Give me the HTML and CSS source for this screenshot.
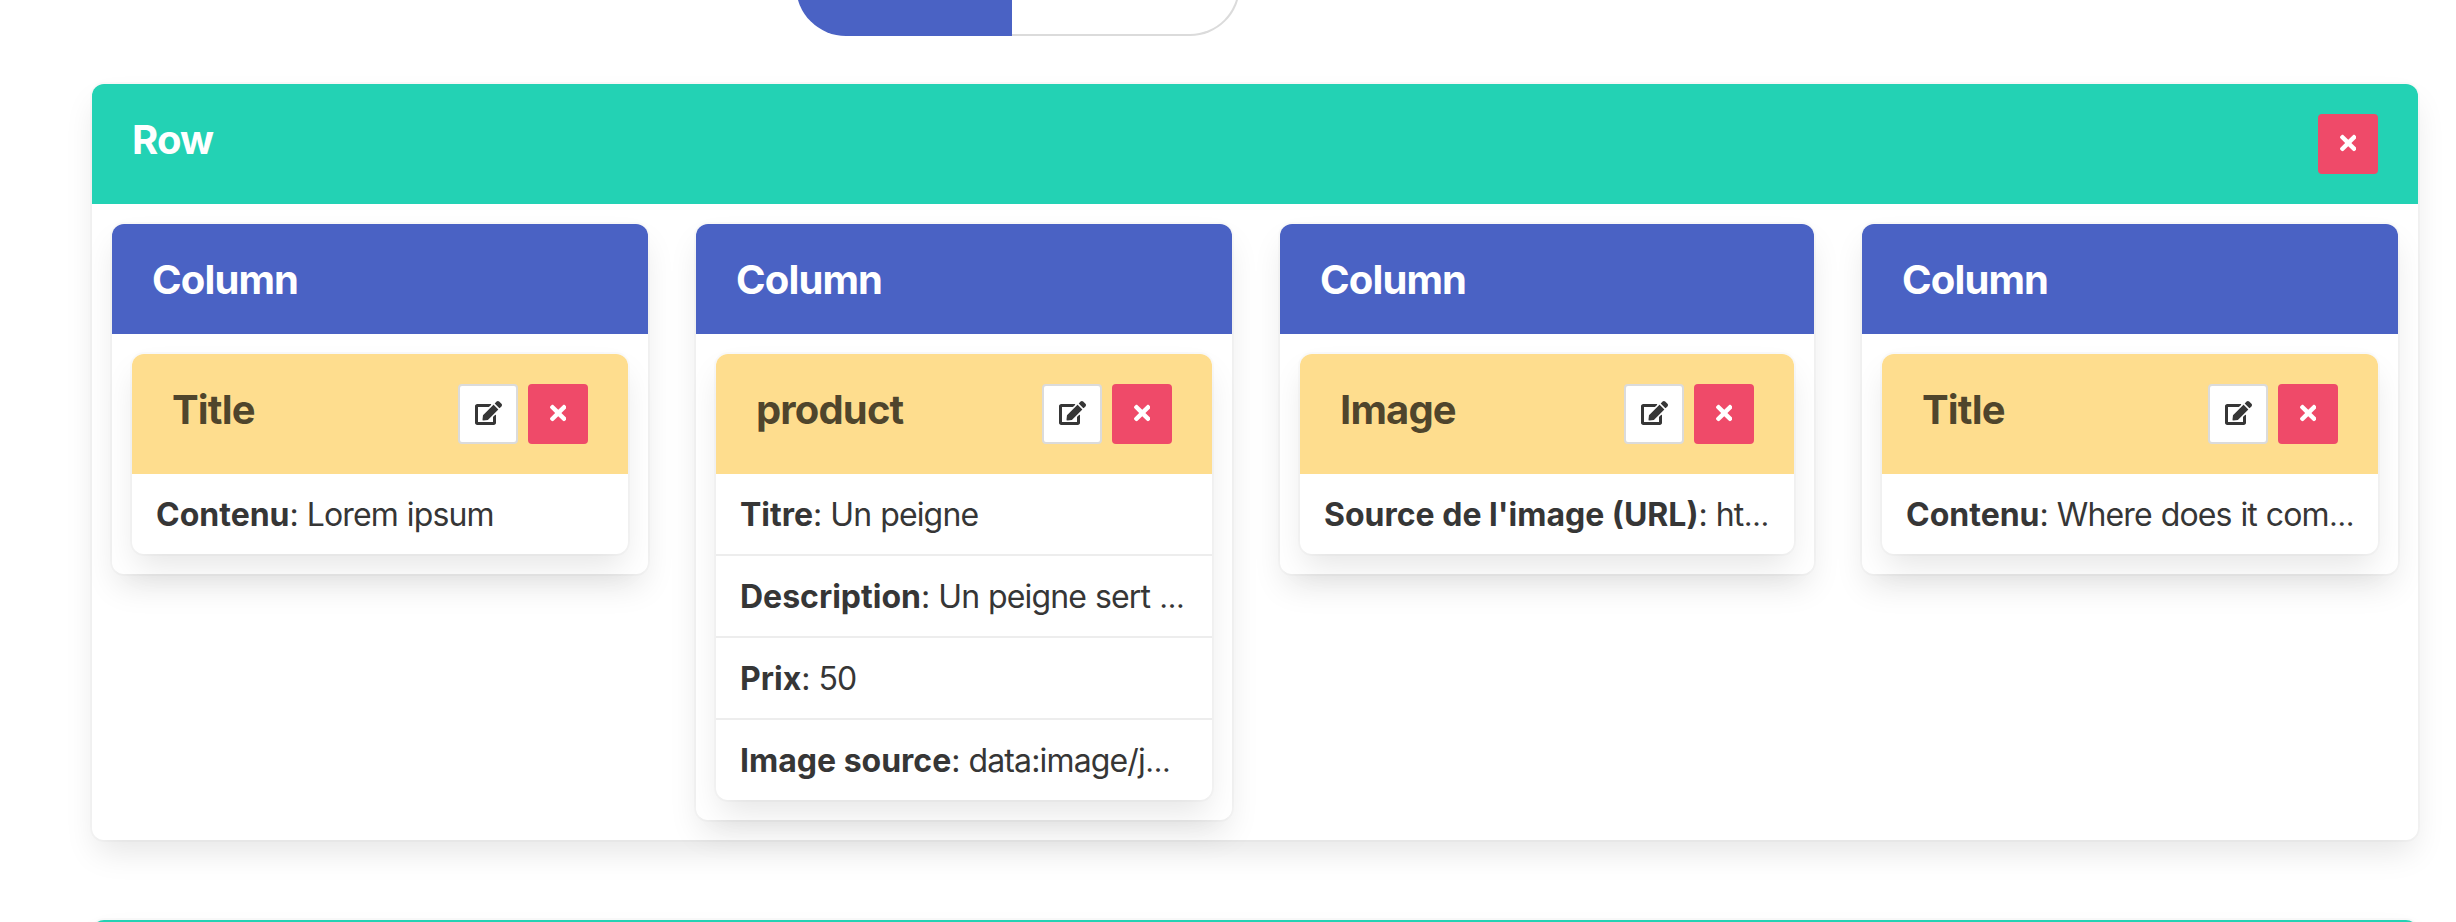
FILE: index.html
```html
<!DOCTYPE html>
<html lang="fr">
<head>
<meta charset="utf-8">
<title>Page builder</title>
<link rel="stylesheet" href="styles.css">
</head>
<body class="page">
<svg width="0" height="0" class="sprite" aria-hidden="true">
  <symbol id="icon-edit" viewBox="0 0 576 512"><path d="M402.6 83.2l90.2 90.2c3.8 3.8 3.8 10 0 13.8L274.4 405.6l-92.8 10.3c-12.4 1.4-22.9-9.1-21.5-21.5l10.3-92.8L388.8 83.2c3.8-3.8 10-3.8 13.8 0zm162-22.9l-48.8-48.8c-15.2-15.2-39.9-15.2-55.2 0l-35.4 35.4c-3.8 3.8-3.8 10 0 13.8l90.2 90.2c3.8 3.8 10 3.8 13.8 0l35.4-35.4c15.2-15.3 15.2-40 0-55.2zM384 346.2V448H64V128h229.8c3.2 0 6.2-1.3 8.5-3.5l40-40c7.6-7.6 2.2-20.5-8.5-20.5H48C21.5 64 0 85.5 0 112v352c0 26.5 21.5 48 48 48h352c26.5 0 48-21.5 48-48V306.2c0-10.7-12.9-16-20.5-8.5l-40 40c-2.2 2.3-3.5 5.3-3.5 8.5z"/></symbol>
  <symbol id="icon-times" viewBox="0 0 352 512"><path d="M242.72 256l100.07-100.07c12.28-12.28 12.28-32.19 0-44.48l-22.24-22.24c-12.28-12.28-32.19-12.28-44.48 0L176 189.28 75.93 89.21c-12.28-12.28-32.19-12.28-44.48 0L9.21 111.45c-12.28 12.28-12.28 32.19 0 44.48L109.28 256 9.21 356.07c-12.28 12.28-12.28 32.19 0 44.48l22.24 22.24c12.28 12.28 32.2 12.28 44.48 0L176 322.72l100.07 100.07c12.28 12.28 32.2 12.28 44.48 0l22.24-22.24c12.28-12.28 12.28-32.19 0-44.48L242.72 256z"/></symbol>
</svg>

<div class="toggle">
  <button class="toggle-btn is-active" type="button" aria-label="Edit"></button>
  <button class="toggle-btn" type="button" aria-label="Preview"></button>
</div>

<main class="builder">
  <section class="card">
    <header class="card-head is-row">
      <h2 class="title">Row</h2>
      <button class="btn is-danger" type="button"><svg class="icon-times"><use href="#icon-times"/></svg></button>
    </header>
    <div class="columns">
      <article class="card">
        <header class="card-head is-column"><h3 class="title">Column</h3></header>
        <div class="column-body">
          <div class="card">
            <header class="card-head is-block">
              <h4 class="title">Title</h4>
              <button class="btn" type="button"><svg class="icon-edit"><use href="#icon-edit"/></svg></button>
              <button class="btn is-danger" type="button"><svg class="icon-times"><use href="#icon-times"/></svg></button>
            </header>
            <ul class="fields">
              <li class="field"><strong class="label">Contenu</strong>: Lorem ipsum</li>
            </ul>
          </div>
        </div>
      </article>

      <article class="card">
        <header class="card-head is-column"><h3 class="title">Column</h3></header>
        <div class="column-body">
          <div class="card">
            <header class="card-head is-block">
              <h4 class="title">product</h4>
              <button class="btn" type="button"><svg class="icon-edit"><use href="#icon-edit"/></svg></button>
              <button class="btn is-danger" type="button"><svg class="icon-times"><use href="#icon-times"/></svg></button>
            </header>
            <ul class="fields">
              <li class="field"><strong class="label">Titre</strong>: Un peigne</li>
              <li class="field"><strong class="label">Description</strong>: Un peigne sert <span class="dots">…</span></li>
              <li class="field"><strong class="label">Prix</strong>: 50</li>
              <li class="field"><strong class="label">Image source</strong>: data:image/j<span class="dots">…</span></li>
            </ul>
          </div>
        </div>
      </article>

      <article class="card">
        <header class="card-head is-column"><h3 class="title">Column</h3></header>
        <div class="column-body">
          <div class="card">
            <header class="card-head is-block">
              <h4 class="title">Image</h4>
              <button class="btn" type="button"><svg class="icon-edit"><use href="#icon-edit"/></svg></button>
              <button class="btn is-danger" type="button"><svg class="icon-times"><use href="#icon-times"/></svg></button>
            </header>
            <ul class="fields">
              <li class="field"><strong class="label">Source de l'image (URL)</strong>: ht<span class="dots">…</span></li>
            </ul>
          </div>
        </div>
      </article>

      <article class="card">
        <header class="card-head is-column"><h3 class="title">Column</h3></header>
        <div class="column-body">
          <div class="card">
            <header class="card-head is-block">
              <h4 class="title">Title</h4>
              <button class="btn" type="button"><svg class="icon-edit"><use href="#icon-edit"/></svg></button>
              <button class="btn is-danger" type="button"><svg class="icon-times"><use href="#icon-times"/></svg></button>
            </header>
            <ul class="fields">
              <li class="field"><strong class="label">Contenu</strong>: Where does it com<span class="dots">…</span></li>
            </ul>
          </div>
        </div>
      </article>
    </div>
  </section>

  <section class="card is-clipped">
    <header class="card-head is-row is-empty"></header>
  </section>
</main>
</body>
</html>
```
FILE: styles.css
```css
* { box-sizing: border-box; }

.page {
  margin: 0;
  height: 922px;
  overflow: hidden;
  background: #fff;
  color: #363636;
  font-family: Inter, "Liberation Sans", sans-serif;
  font-size: 32px;
  line-height: 48px;
}

.sprite { display: block; }

/* Pill switch, scrolled mostly out of view */
.toggle {
  display: flex;
  width: 444px;
  height: 100px;
  margin: -64px 0 48px 796px;
}
.toggle-btn {
  flex: 1;
  margin: 0;
  padding: 0;
  border: 2px solid #dbdbdb;
  border-left: 0;
  border-radius: 0 50px 50px 0;
  background: #fff;
}
.toggle-btn.is-active {
  flex: 0 0 216px;
  border: 0;
  border-radius: 50px 0 0 50px;
  background: #4a62c4;
}

.builder {
  display: flex;
  flex-direction: column;
  gap: 80px;
  height: 838px;
  padding: 0 38px 0 92px;
}
.builder > .card { flex: none; }

.card {
  border-radius: 12px;
  background: #fff;
  box-shadow: 0 16px 32px -4px rgba(10, 10, 10, .1), 0 0 0 2px rgba(10, 10, 10, .02);
}

.card-head {
  display: flex;
  align-items: flex-start;
  gap: 10px;
  padding: 30px 40px;
  border-radius: 12px 12px 0 0;
  color: #fff;
}
.is-row { background: #23d2b4; }
.is-column { background: #4a62c4; }
.is-block { background: #fedd8e; color: rgba(0, 0, 0, .7); }
.is-empty { height: 120px; }

.title {
  flex: 1;
  margin: 0;
  padding-top: 1px;
  font-size: 40px;
  font-weight: 700;
  line-height: 49px;
  letter-spacing: -.85px;
}

.btn {
  display: flex;
  align-items: center;
  justify-content: center;
  width: 60px;
  height: 60px;
  margin: 0;
  padding: 0 0 2px;
  border: 2px solid #dbdbdb;
  border-radius: 4px;
  background: #fff;
  color: #363636;
}
.btn.is-danger {
  border-color: transparent;
  background: #ef4a69 border-box;
  color: #fff;
}
.icon-edit { width: 27px; height: 24px; fill: currentColor; }
.icon-times { width: 16.5px; height: 24px; fill: currentColor; }

.columns {
  display: grid;
  grid-template-columns: 536px 536px 534px 536px;
  align-items: start;
  gap: 48px;
  padding: 20px;
}
.column-body { padding: 20px; }

.fields {
  margin: 0;
  padding: 0;
  list-style: none;
}
.field {
  padding: 17px 24px 15px;
  border-bottom: 2px solid #ededed;
  letter-spacing: -.85px;
  word-spacing: .7px;
  white-space: nowrap;
}
.field:last-child { border-bottom: 0; }
.label { font-weight: 700; letter-spacing: 0; word-spacing: 0; }
.dots { margin-left: .5px; font-size: 29px; line-height: 1; }
```
